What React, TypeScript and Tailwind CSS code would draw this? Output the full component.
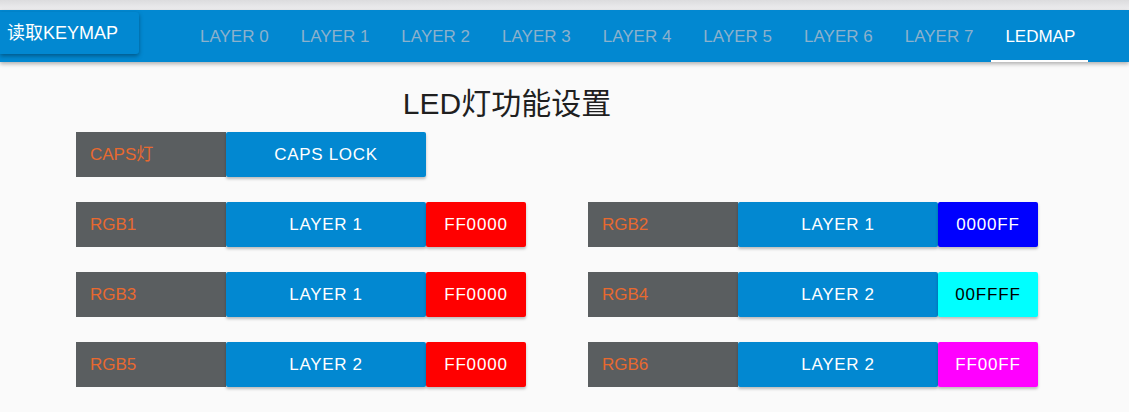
import React from 'react';

const tabs = ['LAYER 0', 'LAYER 1', 'LAYER 2', 'LAYER 3', 'LAYER 4', 'LAYER 5', 'LAYER 6', 'LAYER 7', 'LEDMAP'];

interface LedRow {
  name: string;
  layer: string;
  hex: string;
  bg: string;
  dark?: boolean;
}

const rows: LedRow[] = [
  { name: 'RGB1', layer: 'LAYER 1', hex: 'FF0000', bg: '#ff0000' },
  { name: 'RGB2', layer: 'LAYER 1', hex: '0000FF', bg: '#0000ff' },
  { name: 'RGB3', layer: 'LAYER 1', hex: 'FF0000', bg: '#ff0000' },
  { name: 'RGB4', layer: 'LAYER 2', hex: '00FFFF', bg: '#00ffff', dark: true },
  { name: 'RGB5', layer: 'LAYER 2', hex: 'FF0000', bg: '#ff0000' },
  { name: 'RGB6', layer: 'LAYER 2', hex: 'FF00FF', bg: '#ff00ff' },
];

const font = { fontFamily: '"Liberation Sans", "Noto Sans CJK SC", sans-serif' };

const Label: React.FC<{ text: string }> = ({ text }) => (
  <div className="w-[150px] h-full bg-[#5a5e60] flex items-center pl-[14px] text-[17px] text-[#e8692f]">
    {text}
  </div>
);

const App: React.FC = () => {
  const active = 'LEDMAP';

  return (
    <div className="min-h-screen bg-[#fafafa]" style={font}>
      {/* top strip */}
      <div className="h-[10px] bg-gradient-to-b from-[#dcdcde] to-[#eeeef0]" />

      {/* nav bar */}
      <header className="h-[52px] bg-[#0288d1] flex shadow-[0_2px_4px_rgba(0,0,0,0.3)] relative z-10">
        <button className="mt-[2px] h-[42px] w-[139px] bg-[#0288d1] rounded-r-[3px] shadow-[0_2px_4px_rgba(0,0,0,0.35)] text-white text-[18px] text-left pl-[7px]">
          读取KEYMAP
        </button>
        <nav className="ml-[45px] flex h-full">
          {tabs.map((tab) => (
            <div
              key={tab}
              className={`relative h-full flex items-center justify-center px-[16px] pt-[2px] text-[17px] ${
                tab === active ? 'text-white' : 'text-[#8cb1cc]'
              }`}
            >
              {tab}
              {tab === active && (
                <span className="absolute left-[2px] right-[3px] bottom-0 h-[2px] bg-white" />
              )}
            </div>
          ))}
        </nav>
      </header>

      <main className="pl-[76px]">
        <h1 className="w-[862px] text-center text-[30px] leading-[36px] mt-[24px] text-[#1f1f1f]">
          LED灯功能设置
        </h1>

        {/* caps row */}
        <div className="flex h-[45px] mt-[10px]">
          <Label text="CAPS灯" />
          <button className="w-[200px] h-full bg-[#0288d1] rounded-[2px] shadow-[0_2px_3px_rgba(0,0,0,0.25)] text-white text-[17px] tracking-[0.04em]">
            CAPS LOCK
          </button>
        </div>

        {/* rgb rows */}
        <div className="grid grid-cols-[450px_450px] gap-x-[62px] gap-y-[25px] mt-[25px]">
          {rows.map((row) => (
            <div key={row.name} className="flex h-[45px]">
              <Label text={row.name} />
              <button className="w-[200px] h-full bg-[#0288d1] rounded-[2px] shadow-[0_2px_3px_rgba(0,0,0,0.25)] text-white text-[17px] tracking-[0.04em]">
                {row.layer}
              </button>
              <button
                className={`w-[100px] h-full rounded-[2px] shadow-[0_2px_3px_rgba(0,0,0,0.25)] text-[17px] tracking-[0.05em] ${
                  row.dark ? 'text-black' : 'text-white'
                }`}
                style={{ backgroundColor: row.bg }}
              >
                {row.hex}
              </button>
            </div>
          ))}
        </div>
      </main>
    </div>
  );
};

export default App;
